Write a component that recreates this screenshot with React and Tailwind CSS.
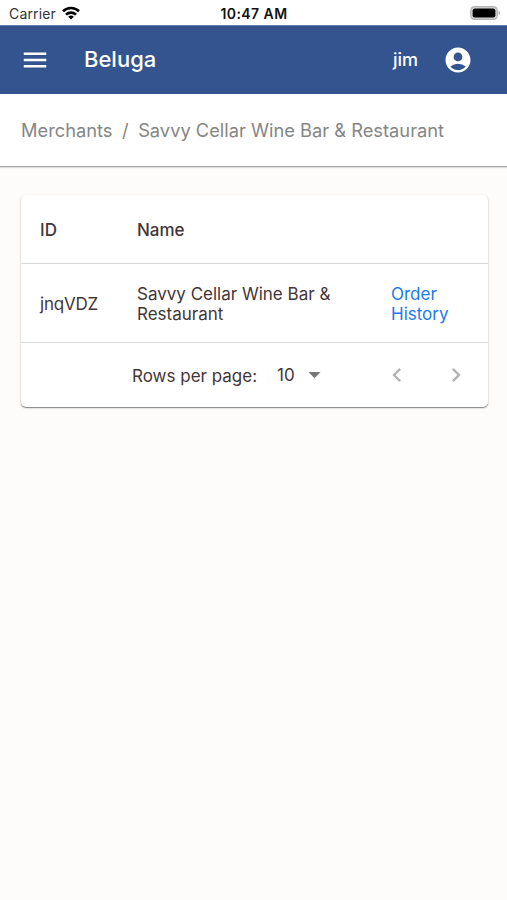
import { MdMenu, MdAccountCircle, MdArrowDropDown, MdChevronLeft, MdChevronRight } from "react-icons/md";

function StatusBar() {
  return (
    <div className="grid h-[25px] shrink-0 grid-cols-3 items-center bg-white pl-[9px] pr-[6px] pt-px text-[14px] text-[#111]">
      <div className="flex items-center gap-[6px]">
        <span className="tracking-[0.15px] text-[#333]">Carrier</span>
        <svg className="mb-px" width="18" height="14" viewBox="0 0 18 14" fill="none" stroke="#000" strokeWidth="2.6">
          <path d="M1 5.2a11.6 11.6 0 0 1 16 0" />
          <path d="M4 8.6a7.3 7.3 0 0 1 10 0" />
          <path d="M9 13.5 6.2 10.8a4.2 4.2 0 0 1 5.6 0Z" fill="#000" stroke="none" />
        </svg>
      </div>
      <span className="-ml-[2px] whitespace-nowrap text-center font-semibold tracking-[0.45px]">10:47 AM</span>
      <svg className="justify-self-end" width="31" height="14" viewBox="0 0 31 14">
        <rect x="0.8" y="0.8" width="26.4" height="12.4" rx="3.6" fill="#ddd" stroke="#b5b5b5" strokeWidth="1.4" />
        <rect x="2.6" y="2.4" width="22.8" height="9.2" rx="2" fill="#000" />
        <path d="M28.6 4.8q1.6.8 1.6 2.2t-1.6 2.2z" fill="#aaa" />
      </svg>
    </div>
  );
}

export default function App() {
  return (
    <div className="flex h-[900px] w-[507px] flex-col overflow-hidden bg-[#fdfcfb] font-[Inter,sans-serif]">
      <StatusBar />
      <header className="flex h-[69px] shrink-0 items-center border-t border-[#5f7eae] bg-[#33548f] pb-px pl-[20px] pr-[34px] text-white">
        <MdMenu size={30} />
        <h1 className="ml-[34px] text-[22px] font-medium">Beluga</h1>
        <span className="ml-auto text-[18px] font-medium">jim</span>
        <MdAccountCircle size={30} className="ml-[25px]" />
      </header>
      <nav className="flex h-[73px] shrink-0 items-center border-b border-[#a5a8a5] bg-white pl-[21px] pt-[2px] text-[18.3px] text-[#858585] shadow-[0_1px_1px_rgba(0,0,0,0.12)]">
        <span>Merchants</span>
        <span className="mx-[9.5px]">/</span>
        <span>Savvy Cellar Wine Bar &amp; Restaurant</span>
      </nav>
      <main className="ml-[21px] mt-[28px] w-[467px] rounded-[5px] bg-white text-[17px] leading-[20px] text-[#443538] shadow-[0_1px_1px_rgba(0,0,0,0.42),0_1px_3px_rgba(0,0,0,0.14)]">
        <div className="flex h-[69px] items-center border-b border-[#d9dbdb] pl-[19px] pt-[2px] font-medium">
          <span className="w-[97px]">ID</span>
          <span>Name</span>
        </div>
        <div className="flex h-[79px] items-center border-b border-[#d9dbdb] pl-[19px] pt-[2px]">
          <span className="w-[97px] tracking-[-0.2px]">jnqVDZ</span>
          <span className="w-[254px] pr-[50px]">Savvy Cellar Wine Bar &amp; Restaurant</span>
          <a className="w-[70px] text-[#1a7bea]">Order History</a>
        </div>
        <div className="flex h-[64px] items-center pl-[111px]">
          <span className="w-[145px] pt-[2px]">Rows per page:</span>
          <span className="w-[23px]">10</span>
          <MdArrowDropDown size={29} className="-mt-px text-[#777]" />
          <MdChevronLeft size={28} className="-mt-px ml-[54px] text-[#b2b2b2]" />
          <MdChevronRight size={28} className="-mt-px ml-[31px] text-[#b2b2b2]" />
        </div>
      </main>
    </div>
  );
}
